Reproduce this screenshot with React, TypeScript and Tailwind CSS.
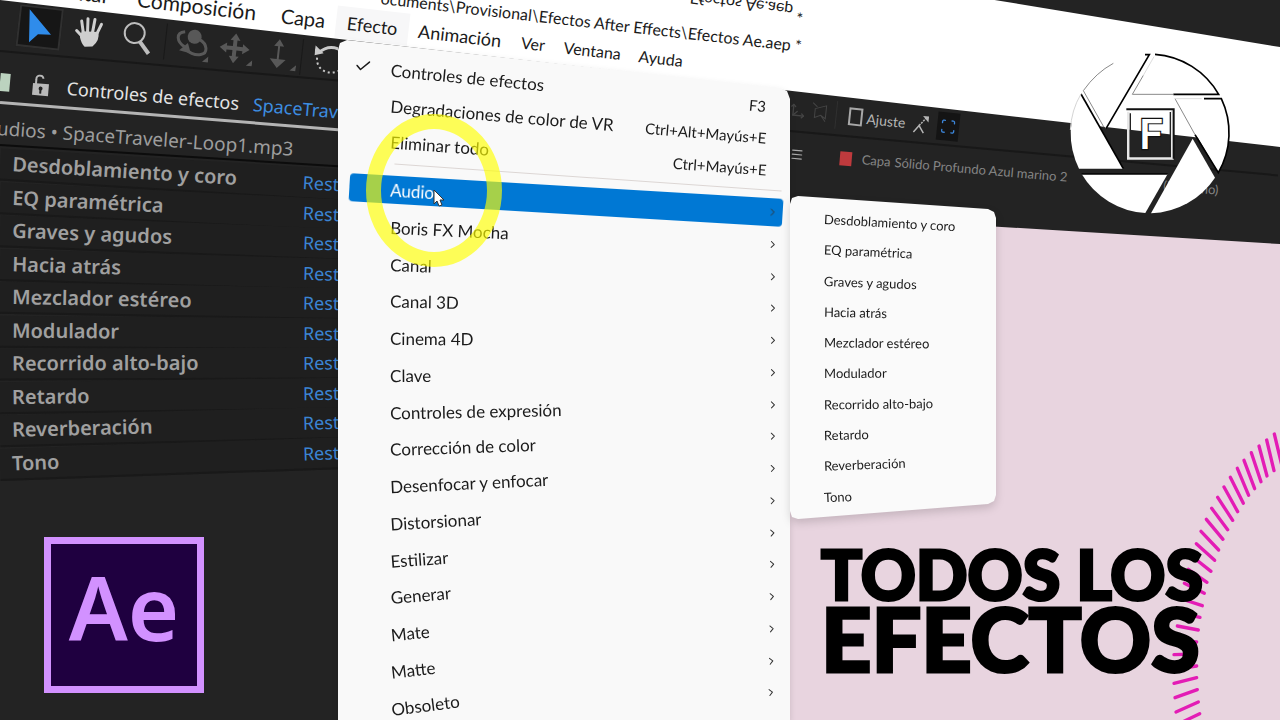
import React from "react";
import { Check, ChevronRight, Menu, Move3d, Scan } from "lucide-react";

interface MenuEntry {
  label: string;
  shortcut?: string;
  checked?: boolean;
}

const MENU_BAR = [
  { label: "Editar", className: "text-[21px] px-[14px]" },
  { label: "Composición", className: "text-[21px] px-[14px]" },
  { label: "Capa", className: "text-[20px] px-[11px]" },
  { label: "Efecto", className: "text-[18px] px-[11px] bg-[#f7f7f8]" },
  { label: "Animación", className: "text-[18px] px-[10px]" },
  { label: "Ver", className: "text-[16px] px-[10px]" },
  { label: "Ventana", className: "text-[16px] px-[9px]" },
  { label: "Ayuda", className: "text-[16px] px-[9px]" },
];

const COMMANDS: MenuEntry[] = [
  { label: "Controles de efectos", shortcut: "F3", checked: true },
  { label: "Degradaciones de color de VR", shortcut: "Ctrl+Alt+Mayús+E" },
  { label: "Eliminar todo", shortcut: "Ctrl+Mayús+E" },
];

const CATEGORIES = [
  "Audio",
  "Boris FX Mocha",
  "Canal",
  "Canal 3D",
  "Cinema 4D",
  "Clave",
  "Controles de expresión",
  "Corrección de color",
  "Desenfocar y enfocar",
  "Distorsionar",
  "Estilizar",
  "Generar",
  "Mate",
  "Matte",
  "Obsoleto",
  "Perspectiva",
];

const AUDIO_EFFECTS = [
  "Desdoblamiento y coro",
  "EQ paramétrica",
  "Graves y agudos",
  "Hacia atrás",
  "Mezclador estéreo",
  "Modulador",
  "Recorrido alto-bajo",
  "Retardo",
  "Reverberación",
  "Tono",
];

// Ticks of the audio ring, outer end to inner end
const TICKS = [
  [1423, 42, 1444, 130],
  [1400, 60, 1422, 152],
  [1377, 78, 1401, 168],
  [1354, 98, 1383, 185],
  [1332, 121, 1364, 206],
  [1312, 145, 1346, 226],
  [1291, 172, 1330, 250],
  [1272, 201, 1313, 275],
  [1253, 232, 1298, 301],
  [1235, 265, 1283, 329],
  [1219, 298, 1269, 358],
  [1203, 334, 1256, 390],
  [1189, 371, 1244, 421],
  [1175, 408, 1233, 454],
  [1165, 448, 1221, 487],
  [1153, 490, 1213, 520],
  [1145, 537, 1207, 557],
  [1138, 578, 1200, 592],
  [1132, 618, 1195, 630],
  [1124, 662, 1190, 666],
  [1122, 704, 1190, 702],
  [1122, 748, 1190, 738],
  [1122, 790, 1190, 773],
  [1125, 833, 1192, 809],
  [1128, 876, 1195, 846],
  [1135, 912, 1199, 881],
];

// Every row tilts a little less than the row above it
const tilt = (first: number, step: number, index: number) => ({
  transform: `rotate(${first - step * index}deg)`,
});

const LockIcon = () => (
  <svg viewBox="0 0 18 22" className="w-[18px] h-[22px] shrink-0" aria-hidden="true">
    <path d="M4 10V5a3.5 3.5 0 0 1 7-1" fill="none" stroke="#b9b9b9" strokeWidth="2" />
    <rect x="1" y="9" width="16" height="12" fill="#b9b9b9" />
    <circle cx="9" cy="14" r="2" fill="#232323" />
    <path d="M8 14h2v5H8z" fill="#232323" />
  </svg>
);

const Toolbar = () => (
  <div className="flex items-center shrink-0 h-11 w-[360px] pl-[18px] mt-px origin-left rotate-[6.4deg]">
    <button aria-label="Selección" className="w-11 h-[42px] flex items-center justify-center bg-[#161616] border-2 border-[#303030]">
      <svg viewBox="0 0 26 34" className="w-[26px] h-[34px]">
        <path d="M1 0 25 23 12 24 4 33Z" fill="#2f8ceb" />
      </svg>
    </button>
    <button aria-label="Mano" className="ml-3 w-8 h-9 flex items-center justify-center">
      <svg viewBox="0 0 30 32" className="w-[30px] h-8" stroke="#cfcfcf" strokeLinecap="round" fill="none">
        <path d="M9 17 6 5M13 15 12 2M18 15l1-13M22 17l4-11M9 21 2 15" strokeWidth="3" />
        <path d="M8 16 23 15Q25 22 19 28L12 29Q9 27 7 21Z" fill="#cfcfcf" strokeWidth="2" />
      </svg>
    </button>
    <button aria-label="Zoom" className="ml-4 w-8 h-9 flex items-center justify-center">
      <svg viewBox="0 0 32 34" className="w-8 h-[34px]" fill="none" stroke="#bdbdbd">
        <circle cx="13" cy="12" r="10" strokeWidth="2" />
        <path d="m19 20 10 11" strokeWidth="4" />
      </svg>
    </button>
    <span className="w-px h-9 bg-[#191919] ml-3" />
    <button aria-label="Órbita" className="ml-2 w-9 h-9 flex items-center justify-center">
      <svg viewBox="0 0 36 34" className="w-9 h-[34px]" fill="none" stroke="#585858" strokeWidth="3">
        <circle cx="20" cy="9" r="7" fill="#585858" stroke="none" />
        <path d="M10 5C0 7 3 16 11 20M25 11c9 4 10 13 3 15s-12-1-16-4" />
        <path d="m6 24 12 2-4-10z" fill="#585858" stroke="none" />
        <path d="M36 27v6h-6z" fill="#585858" stroke="none" />
      </svg>
    </button>
    <button aria-label="Desplazar" className="ml-2 w-9 h-9 flex items-center justify-center">
      <svg viewBox="0 0 36 34" className="w-9 h-[34px]" fill="#585858">
        <path d="m17 1 5 7h-3v6h6v-3l7 5-7 5v-3h-6v6h3l-5 7-5-7h3v-6H9v3l-7-5 7-5v3h6V8h-3z" />
        <path d="M36 26v6h-6z" />
      </svg>
    </button>
    <button aria-label="Profundidad" className="ml-2 w-9 h-9 flex items-center justify-center">
      <svg viewBox="0 0 36 34" className="w-9 h-[34px]" fill="#585858">
        <path d="m17 2 5 7h-4v13h7l-8 9-8-9h7V9h-4z" />
        <path d="M36 26v6h-6z" />
      </svg>
    </button>
    <span className="w-px h-9 bg-[#191919] ml-1" />
    <button aria-label="Rotar" className="ml-3 w-8 h-8 flex items-center justify-center">
      <svg viewBox="0 0 32 32" className="w-8 h-8" fill="none" stroke="#c9c9c9" strokeWidth="3">
        <path d="M4 10Q14-1 28 6" />
        <path d="M0 3v10l9-3z" fill="#c9c9c9" stroke="none" />
        <path d="M3 15c0 14 17 18 26 8" strokeWidth="2" strokeDasharray="2 3" />
      </svg>
    </button>
  </div>
);

const EffectControls = () => (
  <aside className="w-[338px] h-full shrink-0 overflow-hidden flex flex-col bg-[#232323] font-['Noto_Sans',sans-serif]">
    <Toolbar />
    <hr className="shrink-0 w-[360px] mt-[5px] border-0 h-[2px] bg-[#181818] origin-left rotate-[5deg]" />
    <div className="flex items-center shrink-0 w-[400px] h-8 mt-[14px] origin-left rotate-[5deg] whitespace-nowrap">
      <span className="w-[10px] h-[18px] bg-[#bcd3bf]" />
      <span className="ml-[22px] flex">
        <LockIcon />
      </span>
      <h2 className="ml-[17px] text-[18px] text-[#e4e4e4]">Controles de efectos</h2>
      <a href="#fuente" className="ml-[14px] text-[18px] text-[#3d8de0]">SpaceTraveler</a>
    </div>
    <hr className="shrink-0 w-[360px] mt-[3px] border-0 h-[3px] bg-[#b4b4b4] origin-left rotate-[4.6deg]" />
    <p className="shrink-0 w-[400px] h-7 leading-7 mt-[10px] -ml-[3px] origin-left rotate-[4deg] whitespace-nowrap text-[19px] text-[#9d9d9d]">
      udios • SpaceTraveler-Loop1.mp3
    </p>
    <hr className="shrink-0 w-[360px] mt-[2px] border-0 h-[2px] bg-[#0c0c0c] origin-left rotate-[3.6deg]" />
    <ul className="shrink-0 h-[315px] mt-[13px] grid auto-rows-fr">
      {AUDIO_EFFECTS.map((name, i) => (
        <li
          key={name}
          style={tilt(3.5, 0.61, i)}
          className="flex items-center justify-between w-[344px] pl-3 whitespace-nowrap bg-[#1f1f1f] border-b-2 border-[#191919]"
        >
          <span className="text-[20px] leading-6 font-semibold text-[#a0a0a0]">{name}</span>
          <button className="w-[41px] text-left text-[18px] leading-6 text-[#3b84d3]">Rest</button>
        </li>
      ))}
    </ul>
    <div className="mt-auto mb-[27px] ml-11 w-40 h-[156px] shrink-0 flex items-center justify-center border-[7px] border-[#d291ff] bg-[#1f0040]">
      <span className="font-semibold text-[88px] leading-none text-[#d291ff] pb-4">Ae</span>
    </div>
  </aside>
);

const EffectMenu = () => (
  <div className="relative z-20 w-[452px] shrink-0 pt-10">
    <div className="h-full drop-shadow-md">
      <div
        role="menu"
        className="h-full pt-[30px] bg-[#f9f9f9] text-[#1b1b1b] [clip-path:polygon(0_10px,2px_3px,9px_0,calc(100%_-_10px)_48px,calc(100%_-_3px)_51px,100%_59px,100%_100%,0_100%)]"
      >
        <div className="h-[102px] grid auto-rows-fr">
          {COMMANDS.map((item, i) => (
            <button
              key={item.label}
              role="menuitem"
              style={tilt(5.4, 0.65, i)}
              className="mx-[11px] pr-3 flex items-center whitespace-nowrap"
            >
              <span className="w-[41px] shrink-0 flex">
                {item.checked && <Check className="w-[18px] h-[18px] ml-1 -mt-1" strokeWidth={2} />}
              </span>
              <span className="text-[17px] leading-7">{item.label}</span>
              <span className="ml-auto text-[15px]">{item.shortcut}</span>
            </button>
          ))}
        </div>
        <hr className="ml-14 mr-2 my-[5px] border-0 h-px bg-[#dcd6d4] rotate-[4deg]" />
        <div className="h-[556px] grid auto-rows-fr">
          {CATEGORIES.map((name, i) => (
            <div key={name} style={tilt(3.4, 0.757, i)} className="ml-[11px] mr-[7px] flex items-center">
              <button
                role="menuitem"
                className={`w-full h-7 pl-[41px] pr-1 flex items-center justify-between rounded-[4px] text-[17px] whitespace-nowrap ${
                  i === 0 ? "bg-[#0078d4] text-white" : ""
                }`}
              >
                {name}
                <ChevronRight className="w-3 h-3 text-[#333333]" strokeWidth={2} />
              </button>
            </div>
          ))}
        </div>
      </div>
    </div>

    {/* Click highlight and pointer */}
    <span className="absolute left-7 top-[114px] w-[136px] h-[153px] rounded-[50%] border-[15px] border-[#ffff00]/65" />
    <svg viewBox="0 0 12 18" className="absolute left-[95px] top-[189px] w-3 h-[18px]">
      <path d="M1 1v14l3-3 2 5 3-1-2-5h4z" fill="#ffffff" stroke="#333333" strokeWidth="1" />
    </svg>
  </div>
);

const AudioSubmenu = () => (
  <div className="absolute z-20 left-0 top-[196px] w-[206px] drop-shadow-lg">
    <div
      role="menu"
      className="h-[323px] pt-[6px] pb-1 grid auto-rows-fr bg-[#fafafa] text-[#1b1b1b] [clip-path:polygon(0_8px,2px_2px,8px_0,calc(100%_-_8px)_13px,calc(100%_-_2px)_16px,100%_22px,100%_calc(100%_-_24px),calc(100%_-_2px)_calc(100%_-_18px),calc(100%_-_8px)_calc(100%_-_15px),8px_100%,2px_calc(100%_-_2px),0_calc(100%_-_8px))]"
    >
      {AUDIO_EFFECTS.map((name, i) => (
        <button
          key={name}
          role="menuitem"
          style={tilt(3.2, 0.66, i)}
          className="origin-left pl-[34px] text-left text-[13px] whitespace-nowrap"
        >
          {name}
        </button>
      ))}
    </div>
  </div>
);

const Viewer = () => (
  <main className="relative flex-1 min-w-0 h-full flex flex-col bg-[#232323]">
    <div className="flex items-center shrink-0 h-8 mt-[94px] origin-left rotate-[6deg] text-[14px] text-[#b5b5b5]">
      <Move3d className="w-4 h-5 text-[#444444]" />
      <svg viewBox="0 0 16 20" className="w-4 h-5 ml-[6px]" fill="none" stroke="#444444">
        <path d="M3 6 14 2v13l-5-3-6 3zM0 0l5 4M9 12l5 6" />
      </svg>
      <span className="w-px h-7 ml-2 bg-[#303030]" />
      <label className="ml-3 flex items-center gap-1">
        <input type="checkbox" className="appearance-none w-[14px] h-[18px] border-2 border-[#a8a8a8]" />
        Ajuste
      </label>
      <svg viewBox="0 0 16 20" className="w-4 h-5 ml-2" fill="none" stroke="#b5b5b5" strokeWidth="1.5">
        <path d="m1 19 5-7 5 7" />
        <path d="m6 12 7-9" strokeDasharray="2 1" />
        <path d="M9 2h6v6z" fill="#b5b5b5" stroke="none" />
      </svg>
      <button aria-label="Ajustar a características" className="w-[22px] h-7 ml-2 flex items-center justify-center bg-[#141414]">
        <Scan className="w-4 h-5 text-[#3c86da]" strokeWidth={2} strokeDasharray="4 1" />
      </button>
    </div>
    <hr className="shrink-0 mt-1 border-0 h-[2px] bg-[#181818] origin-left rotate-[5.2deg]" />
    <div className="flex items-center shrink-0 h-7 mt-2 pr-[60px] origin-left rotate-[4.9deg] whitespace-nowrap text-[13px] text-[#858585]">
      <Menu className="w-[14px] h-5 text-[#a9a9a9]" />
      <span className="w-3 h-[14px] ml-9 bg-[#bf3a3d]" />
      <span className="ml-[10px]">Capa</span>
      <span className="ml-1">Sólido Profundo Azul marino 2</span>
      <span className="ml-auto">(Ninguno)</span>
    </div>
    <div className="flex-1 mt-[46px] flex flex-col justify-end bg-[#e8d4df] [clip-path:polygon(0_0,100%_30px,100%_100%,0_100%)]">
      <svg viewBox="1110 0 330 900" className="absolute right-0 bottom-0 w-[110px] h-[300px]" stroke="#e31cb5" strokeWidth="10" strokeLinecap="round">
        {TICKS.map(([x1, y1, x2, y2]) => (
          <line key={y1} x1={x1} y1={y1} x2={x2} y2={y2} />
        ))}
      </svg>
      <h1 className="relative pl-[31px] pb-[46px] font-black text-black whitespace-nowrap [-webkit-text-stroke:3px_#000000]">
        <span className="block text-[68px] leading-[56px]">TODOS LOS</span>
        <span className="block text-[88px] leading-[72px]">EFECTOS</span>
      </h1>
    </div>
    <AudioSubmenu />
  </main>
);

const TitleBar = () => (
  <header className="col-start-1 row-start-1 z-10 h-[147px] grid grid-cols-[minmax(0,1fr)] content-start bg-white text-[#1b1b1b] overflow-hidden [clip-path:polygon(0_0,77.7%_0,100%_32%,100%_100%)]">
    <nav className="col-start-1 row-start-1 h-7 -mt-[26px] ml-[42px] flex items-center origin-left rotate-[6.5deg] whitespace-nowrap">
      {MENU_BAR.map((item) => (
        <button key={item.label} className={`h-8 ${item.className}`}>
          {item.label}
        </button>
      ))}
    </nav>
    <p className="col-start-1 row-start-1 h-6 leading-6 -mt-[14px] ml-[381px] origin-left rotate-[6.5deg] whitespace-nowrap text-[16px]">
      ocuments\Provisional\Efectos After Effects\Efectos Ae.aep *
    </p>
    {/* Mirrored tail of the path on the reflected title bar */}
    <p className="col-start-1 row-start-1 h-6 -mt-[14px] ml-[690px] origin-left rotate-[7deg] whitespace-nowrap text-[16px]" aria-hidden="true">
      <span className="block leading-6 -scale-y-100">Efectos Ae.aep *</span>
    </p>
  </header>
);

const ApertureLogo = () => (
  <svg viewBox="0 0 570 570" className="absolute z-30 right-[30px] top-10 w-[190px] h-[190px]" role="img" aria-label="F">
    <g fill="#ffffff">
      <path d="M70 152A239 239 0 0 1 268 43L138 266Z" />
      <path d="M285 43A239 239 0 0 1 476 163H217Z" />
      <path d="M484 176A239 239 0 0 1 475 398L345 176Z" />
      <path d="M465 413A239 239 0 0 1 273 520L398 296Z" />
      <path d="M256 519A239 239 0 0 1 65 402H323Z" />
      <path d="M57 386A239 239 0 0 1 63 162L190 386Z" />
    </g>
    <g fill="none" stroke="#000000" strokeWidth="5">
      <path d="M255 44h13L138 266" />
      <path d="M285 43A239 239 0 0 1 476 163H340" />
      <path d="M432 176h52A239 239 0 0 1 475 398L405 284" />
      <path d="M63 162 190 386" />
      <path d="M65 402H323" />
    </g>
    <g fill="none" stroke="#8a8a8a" strokeWidth="3">
      <path d="M160 70Q108 98 70 152L132 262" />
      <path d="M340 163H217L250 106" />
      <path d="M345 176 405 284" />
      <path d="M63 162Q34 210 31 270" stroke="#d5d5d5" />
      <path d="M250 106 282 50M345 176h80" stroke="#dddddd" />
    </g>
    <path d="M205 215v140h132V210" fill="none" stroke="#e8e8e8" strokeWidth="8" />
    <path d="M199 208h142v148" fill="none" stroke="#111111" strokeWidth="6" />
    <path d="M211 220v130h120V216" fill="none" stroke="#222222" strokeWidth="4" />
    <text
      x="238"
      y="328"
      fontFamily="Roboto, sans-serif"
      fontWeight="500"
      fontSize="128"
      fill="#ffffff"
      stroke="#111111"
      strokeWidth="7"
      paintOrder="stroke"
    >
      F
    </text>
  </svg>
);

const App: React.FC = () => {
  return (
    <div className="relative h-screen overflow-hidden grid grid-cols-[minmax(0,1fr)] grid-rows-[minmax(0,1fr)] items-start bg-[#232323] font-['Lato',sans-serif]">
      <div className="col-start-1 row-start-1 h-full flex">
        <EffectControls />
        <EffectMenu />
        <Viewer />
      </div>
      <TitleBar />
      <ApertureLogo />
    </div>
  );
};

export default App;
